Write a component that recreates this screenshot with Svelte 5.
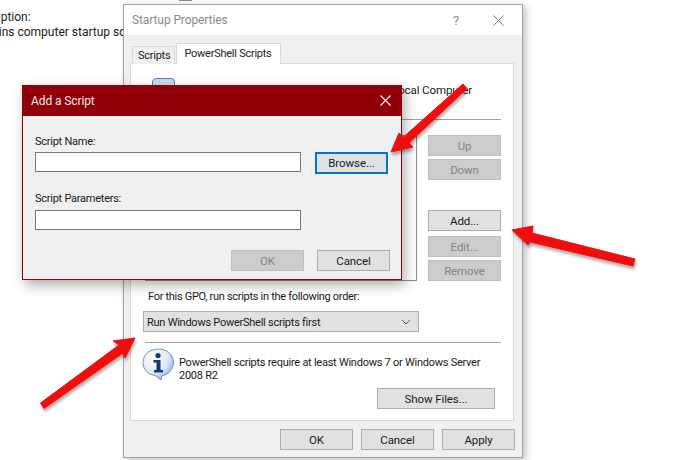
<script lang="ts">
  const sideTop = [
    { label: "Up", off: true },
    { label: "Down", off: true },
  ];
  const sideBottom = [
    { label: "Add...", off: false },
    { label: "Edit...", off: true },
    { label: "Remove", off: true },
  ];
  // outline of each red arrow, tip first; the shaft widens towards the head
  const arrows = [
    "391,152 399,133 403.5,137 463,84 467,88.5 409,143 413,147",
    "512,230 533,226 532,233 635,259 633,266 530,242 528,245",
    "135,338 113,341 119,345 40.5,403 44,408.5 123,353 125,358",
  ];
</script>

<div class="desktop">
  <div class="bg-text">
    <div>Description:</div>
    <div>Contains computer startup scripts</div>
  </div>
  <div class="top-mark"></div>

  <div class="win">
    <div class="titlebar">
      <span class="title">Startup Properties</span>
      <span class="help">?</span>
      <svg class="close" width="11" height="11" viewBox="0 0 11 11"><path d="M0.5 0.5 L10.5 10.5 M10.5 0.5 L0.5 10.5" stroke="#7a7a7a" fill="none" /></svg>
    </div>

    <div class="body">
      <div class="tabs">
        <div class="tab">Scripts</div>
        <div class="tab active">PowerShell Scripts</div>
      </div>

      <div class="panel">
        <div class="head">
          <div class="script-icon"></div>
          <span class="head-text">Windows PowerShell Startup Scripts for Local Computer</span>
        </div>
        <div class="rule"></div>

        <div class="middle">
          <div class="listbox"></div>
          <div class="side">
            <div class="side-group">
              {#each sideTop as b}
                <div class="btn side-btn" class:off={b.off}>{b.label}</div>
              {/each}
            </div>
            <div class="side-group low">
              {#each sideBottom as b}
                <div class="btn side-btn" class:off={b.off}>{b.label}</div>
              {/each}
            </div>
          </div>
        </div>

        <div class="order-label">For this GPO, run scripts in the following order:</div>
        <div class="select">
          <span>Run Windows PowerShell scripts first</span>
          <svg width="10" height="6" viewBox="0 0 10 6"><path d="M1 1 L5 5 L9 1" stroke="#555" fill="none" /></svg>
        </div>
        <div class="rule second"></div>

        <div class="info">
          <svg class="info-icon" width="33" height="33" viewBox="0 0 33 33">
            <defs>
              <radialGradient id="bubble" cx="0.35" cy="0.3" r="0.8">
                <stop offset="0" stop-color="#ffffff" />
                <stop offset="0.6" stop-color="#dbe8f6" />
                <stop offset="1" stop-color="#7fa6d4" />
              </radialGradient>
            </defs>
            <path d="M16.5 1 C25.5 1 31.5 7 31.5 14.5 C31.5 21.5 26 27 20 27.5 L19 32 L13 27.5 C6 26.5 1 21.5 1 14.5 C1 7 7.5 1 16.5 1 Z" fill="url(#bubble)" stroke="#6f93bd" />
            <circle cx="16" cy="7.5" r="2.6" fill="#15386f" />
            <path d="M11.5 12 H18.5 V22 H21 V24.5 H12 V22 H14.5 V14.5 H11.5 Z" fill="#15386f" />
          </svg>
          <div class="info-text">PowerShell scripts require at least Windows 7 or Windows Server 2008 R2</div>
        </div>

        <div class="show-row">
          <div class="btn show">Show Files...</div>
        </div>
      </div>

      <div class="footer">
        <div class="btn foot">OK</div>
        <div class="btn foot">Cancel</div>
        <div class="btn foot">Apply</div>
      </div>
    </div>
  </div>

  <div class="dialog">
    <div class="dlg-title">
      <span>Add a Script</span>
      <svg width="11" height="11" viewBox="0 0 11 11"><path d="M0.5 0.5 L10.5 10.5 M10.5 0.5 L0.5 10.5" stroke="#fff" fill="none" stroke-width="1.1" /></svg>
    </div>
    <div class="dlg-body">
      <div class="dlg-label">Script Name:</div>
      <div class="dlg-row">
        <div class="input"></div>
        <div class="btn browse">Browse...</div>
      </div>
      <div class="dlg-label two">Script Parameters:</div>
      <div class="input"></div>
      <div class="dlg-actions">
        <div class="btn foot off">OK</div>
        <div class="btn foot">Cancel</div>
      </div>
    </div>
  </div>

  <svg class="arrows" width="700" height="460" viewBox="0 0 700 460">
    <defs>
      <filter id="soft" x="-20%" y="-20%" width="140%" height="140%">
        <feDropShadow dx="1" dy="3" stdDeviation="1.8" flood-color="#000" flood-opacity="0.32" />
      </filter>
    </defs>
    {#each arrows as points}
      <polygon {points} class="arrow" filter="url(#soft)" />
    {/each}
  </svg>
</div>

<style>
  :global(body) {
    margin: 0;
    background: #fff;
  }

  .desktop {
    position: relative;
    width: 700px;
    height: 460px;
    overflow: hidden;
    background: #fff;
    font-family: Roboto, "Liberation Sans", sans-serif;
    font-size: 11px;
    letter-spacing: -0.25px;
    color: #1a1a1a;
  }

  .bg-text {
    position: absolute;
    left: -33px;
    top: 10px;
    font-size: 12px;
    letter-spacing: 0;
    line-height: 15px;
    white-space: nowrap;
  }

  .top-mark {
    position: absolute;
    left: 179px;
    top: 0;
    width: 13px;
    height: 1px;
    background: #8a8a8a;
  }

  .win {
    position: absolute;
    left: 123px;
    top: 4px;
    width: 400px;
    height: 454px;
    box-sizing: border-box;
    border: 1px solid #a3a3a3;
    background: #fff;
    box-shadow: 3px 2px 7px rgba(0, 0, 0, 0.25);
    display: flex;
    flex-direction: column;
  }

  .titlebar {
    height: 30px;
    flex: none;
    display: flex;
    align-items: center;
    padding: 0 18px 0 8px;
    color: #8a8a8a;
    font-size: 12px;
    letter-spacing: -0.1px;
  }

  .title {
    flex: 1;
  }

  .help {
    margin-right: 34px;
    font-size: 13px;
    color: #8a8a8a;
  }

  .close {
    display: block;
  }

  .body {
    flex: 1;
    display: flex;
    flex-direction: column;
    background: #f0f0f0;
    padding: 8px 7px 7px 6px;
    min-height: 0;
  }

  .tabs {
    display: flex;
    align-items: flex-end;
    height: 21px;
    padding-left: 2px;
    position: relative;
    z-index: 1;
    margin-bottom: -1px;
    flex: none;
  }

  .tab {
    height: 18px;
    line-height: 17px;
    padding: 0 4px 0 5px;
    box-sizing: border-box;
    border: 1px solid #d9d9d9;
    border-bottom: 0;
    background: #f0f0f0;
    color: #222;
  }

  .tab.active {
    height: 21px;
    line-height: 19px;
    background: #fff;
    margin-left: 1px;
    padding: 0 8px 0 7px;
  }

  .panel {
    height: 358px;
    flex: none;
    box-sizing: border-box;
    width: 384px;
    background: #fff;
    border: 1px solid #d9d9d9;
    padding: 14px 12px 0 14px;
    display: flex;
    flex-direction: column;
  }

  .head {
    height: 41px;
    display: flex;
    flex: none;
    white-space: nowrap;
    overflow: hidden;
  }

  .script-icon {
    width: 23px;
    height: 30px;
    margin-left: 7px;
    box-sizing: border-box;
    background: #c9dcf0;
    border: 1px solid #5b7ea8;
    border-radius: 4px;
    flex: none;
  }

  .head-text {
    padding-top: 5px;
    margin: 0 29px 0 auto;
    font-size: 11.5px;
    letter-spacing: -0.1px;
  }

  .rule {
    height: 1px;
    background: #a0a0a0;
    flex: none;
  }

  .middle {
    display: flex;
    justify-content: space-between;
    flex: none;
    margin-top: 15px;
    height: 146px;
  }

  .listbox {
    width: 272px;
    height: 146px;
    box-sizing: border-box;
    border: 1px solid #8c8c8c;
  }

  .side {
    width: 73px;
    display: flex;
    flex-direction: column;
    justify-content: space-between;
  }

  .side-group {
    display: flex;
    flex-direction: column;
    gap: 3px;
  }

  .side-group.low .btn:first-child {
    margin-bottom: 2px;
  }

  .btn {
    box-sizing: border-box;
    display: flex;
    align-items: center;
    justify-content: center;
    background: #e1e1e1;
    border: 1px solid #adadad;
    color: #1a1a1a;
    white-space: nowrap;
    font-size: 11.5px;
    letter-spacing: -0.1px;
  }

  .btn.off {
    background: #cccccc;
    border-color: #bfbfbf;
    color: #838383;
  }

  .side-btn {
    height: 21px;
  }

  .order-label {
    margin: 8px 0 0 3px;
    line-height: 16px;
    flex: none;
    letter-spacing: -0.3px;
  }

  .select {
    margin: 6px 0 0 -2px;
    width: 276px;
    height: 21px;
    box-sizing: border-box;
    border: 1px solid #adadad;
    background: #e1e1e1;
    display: flex;
    align-items: center;
    justify-content: space-between;
    padding: 1px 3px 0 3px;
    flex: none;
  }

  .select svg {
    margin-right: 4px;
  }

  .rule.second {
    margin-top: 10px;
  }

  .info {
    display: flex;
    gap: 4px;
    margin: 5px 0 0 -3px;
    flex: none;
  }

  .info-icon {
    flex: none;
  }

  .info-text {
    width: 315px;
    line-height: 13px;
    padding-top: 8px;
  }

  .show-row {
    display: flex;
    justify-content: flex-end;
    margin: 6px 6px 0 0;
    flex: none;
  }

  .show {
    width: 118px;
    height: 21px;
  }

  .footer {
    display: flex;
    justify-content: flex-end;
    gap: 8px;
    margin-top: 8px;
    flex: none;
  }

  .foot {
    width: 73px;
    height: 21px;
  }

  .dialog {
    position: absolute;
    left: 22px;
    top: 85px;
    width: 380px;
    height: 195px;
    box-sizing: border-box;
    border: 1px solid #8f0009;
    border-top: 0;
    background: #f0f0f0;
    box-shadow: 3px 5px 12px rgba(0, 0, 0, 0.32);
    display: flex;
    flex-direction: column;
  }

  .dlg-title {
    height: 31px;
    margin: 0 -1px;
    flex: none;
    background: #8f0009;
    color: #f4e6e6;
    display: flex;
    align-items: center;
    justify-content: space-between;
    padding: 0 11px 0 9px;
    font-size: 12px;
    letter-spacing: -0.1px;
  }

  .dlg-body {
    padding: 18px 11px 0 12px;
    display: flex;
    flex-direction: column;
    flex: 1;
  }

  .dlg-label {
    line-height: 16px;
    margin-bottom: 2px;
  }

  .dlg-label.two {
    margin-top: 17px;
    margin-bottom: 3px;
  }

  .dlg-row {
    display: flex;
    gap: 14px;
    align-items: flex-start;
  }

  .input {
    width: 266px;
    height: 20px;
    box-sizing: border-box;
    border: 1px solid #7a7a7a;
    background: #fff;
    flex: none;
  }

  .browse {
    width: 73px;
    height: 22px;
    border: 2px solid #0078d7;
  }

  .dlg-actions {
    display: flex;
    justify-content: flex-end;
    gap: 13px;
    margin: 20px 0 0 0;
  }

  .arrows {
    position: absolute;
    left: 0;
    top: 0;
    pointer-events: none;
  }

  .arrow {
    fill: #f00a10;
    stroke: #f00a10;
    stroke-width: 1;
    stroke-linejoin: round;
  }
</style>
